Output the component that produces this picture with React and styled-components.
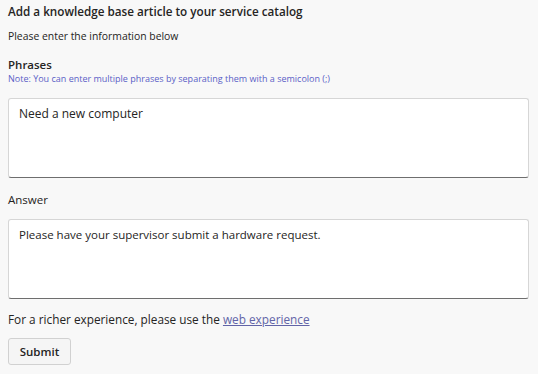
import React from "react";
import styled, { createGlobalStyle } from "styled-components";

const Global = createGlobalStyle`
  html, body { margin: 0; padding: 0; background: #f8f8f8; }
  body { font-family: "Open Sans", "Noto Sans", sans-serif; color: #252423; }
`;

const Page = styled.div`
  display: flex;
  flex-direction: column;
  padding: 3px 9px 0 8px;
  width: 538px;
  box-sizing: border-box;
`;

const Title = styled.h1`
  margin: 0;
  font-size: 11.7px;
  font-weight: 600;
  line-height: 17px;
`;

const Intro = styled.p`
  margin: 10px 0 0;
  font-size: 10.4px;
  line-height: 13px;
`;

const Label = styled.div`
  margin-top: ${(p) => p.$mt}px;
  font-size: 11.5px;
  font-weight: ${(p) => (p.$bold ? 600 : 400)};
  line-height: 16px;
`;

const Note = styled.div`
  font-size: 9px;
  line-height: 12px;
  color: #5b5fc7;
`;

const Field = styled.div`
  margin-top: ${(p) => p.$mt}px;
  height: 80px;
  box-sizing: border-box;
  background: #fff;
  border: 1px solid #d6d6d6;
  border-bottom: 1px solid #6e6e6e;
  border-radius: 3px;
  padding: 7px 10px;
  font-size: ${(p) => p.$fs || 11.5}px;
  line-height: 16px;
`;

const Footer = styled.p`
  margin: 12px 0 0;
  font-size: 11.8px;
  line-height: 16px;
`;

const Link = styled.a`
  color: #6264a7;
  text-decoration: underline;
`;

const Button = styled.button`
  margin-top: 11px;
  align-self: flex-start;
  width: 63px;
  height: 27px;
  background: #f5f5f5;
  border: 1px solid #d1d1d1;
  border-radius: 3px;
  font-family: inherit;
  font-size: 11.5px;
  font-weight: 600;
  color: #252423;
`;

export default function App() {
  return (
    <>
      <Global />
      <Page>
        <Title>Add a knowledge base article to your service catalog</Title>
        <Intro>Please enter the information below</Intro>
        <Label $bold $mt={14}>Phrases</Label>
        <Note>Note: You can enter multiple phrases by separating them with a semicolon (;)</Note>
        <Field $mt={13} $fs={12}>Need a new computer</Field>
        <Label $mt={14}>Answer</Label>
        <Field $mt={11}>Please have your supervisor submit a hardware request.</Field>
        <Footer>
          For a richer experience, please use the <Link href="#">web experience</Link>
        </Footer>
        <Button>Submit</Button>
      </Page>
    </>
  );
}
